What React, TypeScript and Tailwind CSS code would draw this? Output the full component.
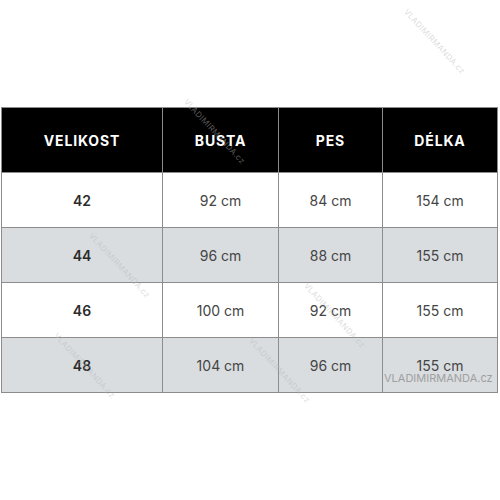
const headers = ['VELIKOST', 'BUSTA', 'PES', 'DÉLKA'];

const rows = [
  ['42', '92 cm', '84 cm', '154 cm'],
  ['44', '96 cm', '88 cm', '155 cm'],
  ['46', '100 cm', '92 cm', '155 cm'],
  ['48', '104 cm', '96 cm', '155 cm'],
];

// faint diagonal watermarks: [left, top]
const marks: [number, number][] = [
  [410, 6],
  [190, 96],
  [95, 230],
  [310, 280],
  [60, 330],
  [255, 335],
];

export default function App() {
  return (
    <div
      className="relative h-[500px] w-[500px] overflow-hidden bg-white"
      style={{ fontFamily: 'Inter, "Open Sans", sans-serif' }}
    >
      <div className="pl-px pt-[107px]">
        <div className="grid w-[497px] grid-cols-[160px_115px_103px_114px] gap-px bg-[#8c8c8c] p-px">
          {headers.map((h) => (
            <div
              key={h}
              className="flex h-[64px] items-center justify-center bg-black text-[14px] font-bold tracking-[0.06em] text-white"
            >
              {h}
            </div>
          ))}
          {rows.map((r, i) =>
            r.map((c, j) => (
              <div
                key={`${i}-${j}`}
                className={`flex h-[54px] items-center justify-center text-[14px] ${
                  i % 2 === 1 ? 'bg-[#d9dde0]' : 'bg-white'
                } ${j === 0 ? 'font-semibold text-[#2b2b2b]' : 'text-[#454545]'}`}
              >
                {c}
              </div>
            ))
          )}
        </div>
      </div>

      {/* watermark overlay */}
      {marks.map(([x, y], k) => (
        <span
          key={k}
          className="pointer-events-none absolute origin-top-left rotate-[47deg] whitespace-nowrap text-[8px] tracking-[0.05em] text-[#b8b8b8]/50"
          style={{ left: x, top: y }}
        >
          VLADIMIRMANDA.cz
        </span>
      ))}
      <span className="pointer-events-none absolute left-[384px] top-[370px] whitespace-nowrap text-[11px] text-[#a0a0a0]">
        VLADIMIRMANDA.cz
      </span>
    </div>
  );
}
